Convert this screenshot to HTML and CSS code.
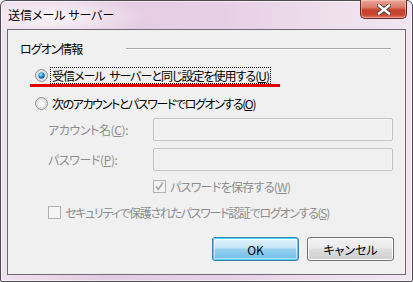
FILE: index.html
```html
<!DOCTYPE html>
<html lang="ja">
<head>
    <meta charset="UTF-8">
    <title>送信メール サーバー</title>
    <link rel="stylesheet" href="styles.css">
</head>
<body>
    <div class="window">
        <div class="titlebar">
            <span class="title">送信メール サーバー</span>
            <button class="close" aria-label="閉じる">
                <svg width="14" height="11" viewBox="0 0 14 11">
                    <path d="M2 1.5 L12 9.5 M12 1.5 L2 9.5" stroke="#4a3a3a" stroke-width="4.2" stroke-linecap="square"/>
                    <path d="M2 1.5 L12 9.5 M12 1.5 L2 9.5" stroke="#fff" stroke-width="2.4" stroke-linecap="square"/>
                </svg>
            </button>
        </div>
        <div class="client">
            <div class="group-head">
                <span class="caption">ログオン情報</span>
                <span class="rule"></span>
            </div>

            <div class="option first">
                <svg class="radio" width="13" height="13" viewBox="0 0 13 13">
                    <defs>
                        <radialGradient id="dot" cx="0.4" cy="0.35" r="0.7">
                            <stop offset="0" stop-color="#a8ecff"/>
                            <stop offset="0.5" stop-color="#2a8fd3"/>
                            <stop offset="1" stop-color="#0b3f7a"/>
                        </radialGradient>
                    </defs>
                    <circle cx="6.5" cy="6.5" r="6" fill="#e6e6e6" stroke="#8e8f8f"/>
                    <circle cx="6.5" cy="6.5" r="4.6" fill="#f6f6f6" stroke="#d2d2d2"/>
                    <circle cx="6.5" cy="6.5" r="3.2" fill="url(#dot)"/>
                </svg>
                <span class="focus">受信メール サーバーと同じ設定を使用する(<u>U</u>)</span>
                <span class="mark"></span>
            </div>

            <div class="option second">
                <svg class="radio" width="13" height="13" viewBox="0 0 13 13">
                    <circle cx="6.5" cy="6.5" r="6" fill="#e6e6e6" stroke="#8e8f8f"/>
                    <circle cx="6.5" cy="6.5" r="4.6" fill="#f4f4f4" stroke="#d2d2d2"/>
                </svg>
                <span class="kana">次のアカウントとパスワードでログオンする(<u>O</u>)</span>
            </div>

            <div class="field account">
                <label>アカウント名(<u>C</u>):</label>
                <span class="input"></span>
            </div>
            <div class="field password">
                <label>パスワード(<u>P</u>):</label>
                <span class="input"></span>
            </div>

            <div class="check save">
                <span class="box">
                    <svg width="11" height="11" viewBox="0 0 11 11">
                        <path d="M2 5.5 L4.3 8.5 L9 1.5" fill="none" stroke="#a6a6a6" stroke-width="1.6"/>
                    </svg>
                </span>
                <span>パスワードを保存する(<u>W</u>)</span>
            </div>
            <div class="check spa">
                <span class="box"></span>
                <span>セキュリティで保護されたパスワード認証でログオンする(<u>S</u>)</span>
            </div>

            <div class="buttons">
                <button class="btn default">OK</button>
                <button class="btn">キャンセル</button>
            </div>
        </div>
    </div>
</body>
</html>
```

FILE: styles.css
```css
body {
    margin: 0;
    font-family: 'Noto Sans CJK JP', 'Noto Sans', sans-serif;
    font-size: 12px;
    font-feature-settings: "palt";
    color: #000;
    background: #fff;
}

.window {
    box-sizing: border-box;
    width: 413px;
    height: 282px;
    border: 1px solid #4f4a52;
    border-radius: 6px 6px 2px 2px;
    box-shadow: inset 0 0 0 1px rgba(255, 255, 255, 0.55);
    padding: 0 6px 6px 6px;
    background:
        radial-gradient(ellipse 90px 22px at 60px 16px, rgba(255, 255, 255, 0.75), rgba(255, 255, 255, 0) 100%),
        linear-gradient(to right, #efe1ee 0%, #e4cbe1 25%, #e7d0e5 55%, #eedfed 80%, #f1e6f1 100%);
    display: flex;
    flex-direction: column;
}

.titlebar {
    height: 28px;
    display: flex;
    align-items: flex-start;
    justify-content: space-between;
}

.title {
    margin-top: 6px;
    margin-left: 1px;
    line-height: 16px;
    font-size: 12px;
    color: #000;
}

.close {
    box-sizing: border-box;
    width: 47px;
    height: 19px;
    margin-top: -1px;
    margin-right: -1px;
    padding: 0;
    border: 1px solid #5e2a26;
    border-top: none;
    border-radius: 0 0 5px 5px;
    background: linear-gradient(#e9a597 0%, #dc7d6c 40%, #c6412f 55%, #c8422f 80%, #e0755f 100%);
    box-shadow: inset 0 0 0 1px rgba(255, 220, 210, 0.45);
    display: flex;
    align-items: center;
    justify-content: center;
}

.client {
    flex: 1;
    position: relative;
    border: 1px solid #6d6a70;
    background: #f0f0f0;
}

.group-head {
    margin-top: 12px;
    height: 14px;
    padding-left: 12px;
    display: flex;
    align-items: center;
    line-height: 14px;
}

.caption {
    letter-spacing: -1px;
}

.rule {
    margin-left: auto;
    margin-right: 14px;
    width: 265px;
    border-top: 1px solid #a9a9a9;
    border-bottom: 1px solid #fff;
}

.option {
    height: 17px;
    padding-left: 27px;
    display: flex;
    align-items: center;
    line-height: 15px;
    position: relative;
}

.option.first {
    margin-top: 11px;
}

.option.second {
    margin-top: 11px;
}

.radio {
    margin-right: 3px;
    flex-shrink: 0;
}

.option span {
    padding: 0 1px;
    letter-spacing: -0.9px;
}

.option .kana {
    letter-spacing: -1.4px;
}

.option .focus {
    outline: 1px dotted #000;
    outline-offset: 0;
    height: 15px;
    word-spacing: 3px;
    letter-spacing: -1px;
}

.mark {
    position: absolute;
    left: 22px;
    top: 17px;
    width: 250px;
    height: 3px;
    background: #e00000;
    padding: 0 !important;
}

.field {
    display: flex;
    align-items: center;
    padding-left: 40px;
    padding-right: 12px;
    color: #8d8d8d;
}

.field.account {
    margin-top: 6px;
}

.field.password {
    margin-top: 7px;
}

.field label {
    width: 105px;
    letter-spacing: -0.4px;
}

.input {
    flex: 1;
    box-sizing: border-box;
    height: 23px;
    border: 1px solid #c3c3c3;
    border-radius: 2px;
    background: #f0f0f0;
    box-shadow: inset 0 0 0 1px #f6f6f6;
}

.check {
    height: 15px;
    display: flex;
    align-items: center;
    color: #8d8d8d;
    line-height: 15px;
}

.check.save {
    margin-top: 8px;
    padding-left: 145px;
    letter-spacing: -0.7px;
}

.check.spa {
    margin-top: 11px;
    padding-left: 40px;
    letter-spacing: -1.3px;
}

.box {
    box-sizing: border-box;
    width: 13px;
    height: 13px;
    margin-right: 4px;
    border: 1px solid #b1b1b1;
    background: #f4f4f4;
    display: flex;
    align-items: center;
    justify-content: center;
    flex-shrink: 0;
}

.buttons {
    margin-top: 17px;
    padding-right: 11px;
    display: flex;
    justify-content: flex-end;
    gap: 8px;
}

.btn {
    box-sizing: border-box;
    width: 87px;
    height: 24px;
    padding: 0;
    font-family: 'Noto Sans CJK JP', 'Noto Sans', sans-serif;
    font-size: 12px;
    font-feature-settings: "palt";
    color: #000;
    border: 1px solid #707070;
    border-radius: 3px;
    background: linear-gradient(#f2f2f2 0%, #ebebeb 45%, #dddddd 50%, #cfcfcf 100%);
    box-shadow: inset 0 0 0 1px #fcfcfc;
}

.btn.default {
    border-color: #3c7fb1;
    background: linear-gradient(#e5f4fc 0%, #c4e5f6 45%, #98d1ef 50%, #6cbde9 100%);
    box-shadow: inset 0 0 0 1px #48d4ff, inset 0 0 0 2px rgba(255, 255, 255, 0.5);
}
```
